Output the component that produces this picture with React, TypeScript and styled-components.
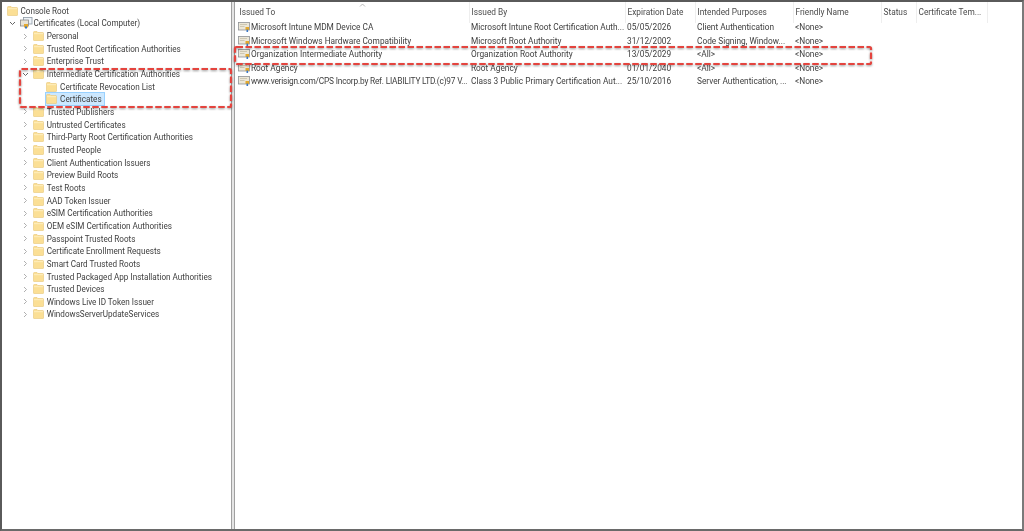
import React from 'react';
import styled, { createGlobalStyle } from 'styled-components';

const GlobalStyle = createGlobalStyle`
  html, body {
    margin: 0;
    padding: 0;
    background: #fff;
  }
`;

const Frame = styled.div`
  position: relative;
  box-sizing: border-box;
  width: 1024px;
  height: 531px;
  display: flex;
  background: #fff;
  border-top: 2px solid #5a5a5a;
  border-left: 2px solid #5a5a5a;
  border-right: 2px solid #7a7a7a;
  border-bottom: 2px solid #6a6a6a;
  font-family: Roboto, 'Open Sans', sans-serif;
  font-size: 8.3px;
  color: #404040;
`;

const TreePane = styled.div`
  box-sizing: border-box;
  width: 230px;
  flex: none;
  padding-top: 2.4px;
  border-right: 1px solid #a0a0a0;
  font-size: 8.15px;
  filter: blur(0.25px);
`;

const Divider = styled.div`
  width: 2px;
  flex: none;
  background: #e4e4e4;
`;

const ListPane = styled.div`
  flex: 1;
  border-left: 1px solid #a0a0a0;
  padding-left: 3px;
  min-width: 0;
  position: relative;
  filter: blur(0.25px);
`;

const TreeRow = styled.div<{ $depth: number }>`
  display: flex;
  align-items: center;
  height: 12.67px;
  padding-left: ${p => 4.5 + p.$depth * 13.2}px;
  white-space: nowrap;
`;

const Twisty = styled.span`
  width: 13px;
  flex: none;
  display: flex;
  align-items: center;
  padding-left: 2px;
  margin-right: -2px;
`;

const TreeItem = styled.span<{ $selected?: boolean }>`
  display: flex;
  align-items: center;
  height: 12px;
  ${p => p.$selected && `
    background: #cce8ff;
    box-shadow: 0 0 0 1px #99d1ff;
    padding-right: 1px;
  `}
`;

const TreeIcon = styled.span`
  width: 14px;
  flex: none;
  display: flex;
  align-items: center;
`;

const TreeLabel = styled.span`
  margin-left: -1px;
  padding: 0 1px;
`;

const GridRow = styled.div`
  display: grid;
  grid-template-columns: 232px 156px 70px 98px 88px 35px 71px;
  align-items: center;
  white-space: nowrap;
`;

const HeaderRow = styled(GridRow)`
  height: 18.5px;
  color: #4a4a4a;
  position: relative;
`;

const HeaderCell = styled.div`
  height: 100%;
  line-height: 21px;
  padding-left: 1.5px;
  box-sizing: border-box;
  border-right: 1px solid #eeeeee;
`;

const SortCaret = styled.svg`
  position: absolute;
  left: 121px;
  top: 1px;
`;

const DataRow = styled(GridRow)`
  height: 13.5px;
`;

const DataCell = styled.div`
  padding-left: 1px;
`;

const IssuedToCell = styled(DataCell)<{ $tight?: boolean }>`
  display: flex;
  align-items: center;
  gap: 1px;
  margin-left: -1px;
  letter-spacing: ${p => (p.$tight ? '-0.19px' : 'normal')};

  svg {
    flex: none;
  }
`;

const CalloutBox = styled.svg<{ $x: number; $y: number }>`
  position: absolute;
  left: ${p => p.$x}px;
  top: ${p => p.$y}px;
  overflow: visible;
  filter: drop-shadow(0 1px 1px rgba(0, 0, 0, 0.4));
`;

const Callout = ({ x, y, w, h }: { x: number; y: number; w: number; h: number }) => (
  <CalloutBox $x={x} $y={y} width={w} height={h} viewBox={`0 0 ${w} ${h}`}>
    <rect x="1" y="1" width={w - 2} height={h - 2} rx="1.5" fill="none" stroke="#e4443e" strokeWidth="2.2" strokeDasharray="6.5 2.5" />
  </CalloutBox>
);

const Folder = () => (
  <svg width="11" height="10" viewBox="0 0 11 10">
    <path d="M0.5 1.2 a.7 .7 0 0 1 .7-.7 H4 L5 1.5 H9.8 a.7 .7 0 0 1 .7 .7 V9 a.5 .5 0 0 1-.5 .5 H1 a.5 .5 0 0 1-.5-.5 Z" fill="#fbdf95" stroke="#e8c878" strokeWidth="0.6" />
    <path d="M1 2.7 H10" stroke="#fff1c4" strokeWidth="0.9" />
  </svg>
);

const Chevron = ({ open }: { open?: boolean }) => (
  <svg width="7" height="7" viewBox="0 0 7 7">
    <path d={open ? 'M1 2 L3.5 4.5 L6 2' : 'M2 1 L4.5 3.5 L2 6'} fill="none" stroke={open ? '#555' : '#a6a6a6'} strokeWidth="0.9" />
  </svg>
);

const StoreIcon = () => (
  <svg width="13" height="12" viewBox="0 0 13 12">
    <rect x="3.5" y="0.5" width="8.5" height="6.5" fill="#eef3f8" stroke="#8d99a6" strokeWidth="0.8" />
    <rect x="0.5" y="3" width="8" height="6" fill="#e9e4d6" stroke="#8a8a8a" strokeWidth="0.8" />
    <rect x="4" y="7" width="4" height="3.5" fill="#e3a92f" />
    <rect x="5" y="9.5" width="2" height="2" fill="#3b78c4" />
  </svg>
);

const CertIcon = () => (
  <svg width="12" height="10" viewBox="0 0 12 10">
    <rect x="0.5" y="0.5" width="11" height="7.5" fill="#ece7d8" stroke="#8f9296" strokeWidth="0.8" />
    <path d="M2 2.5 H9 M2 4.5 H6.5" stroke="#c6bfa8" strokeWidth="0.8" />
    <rect x="7.5" y="5" width="3.5" height="3" fill="#e3a92f" />
    <rect x="8.5" y="7.5" width="1.6" height="2.5" fill="#3b78c4" />
  </svg>
);

const storeNames = [
  'Trusted Publishers',
  'Untrusted Certificates',
  'Third-Party Root Certification Authorities',
  'Trusted People',
  'Client Authentication Issuers',
  'Preview Build Roots',
  'Test Roots',
  'AAD Token Issuer',
  'eSIM Certification Authorities',
  'OEM eSIM Certification Authorities',
  'Passpoint Trusted Roots',
  'Certificate Enrollment Requests',
  'Smart Card Trusted Roots',
  'Trusted Packaged App Installation Authorities',
  'Trusted Devices',
  'Windows Live ID Token Issuer',
  'WindowsServerUpdateServices',
];

const columns = ['Issued To', 'Issued By', 'Expiration Date', 'Intended Purposes', 'Friendly Name', 'Status', 'Certificate Tem...'];

const certificates = [
  ['Microsoft Intune MDM Device CA', 'Microsoft Intune Root Certification Auth...', '05/05/2026', 'Client Authentication', '<None>'],
  ['Microsoft Windows Hardware Compatibility', 'Microsoft Root Authority', '31/12/2002', 'Code Signing, Window...', '<None>'],
  ['Organization Intermediate Authority', 'Organization Root Authority', '13/05/2029', '<All>', '<None>'],
  ['Root Agency', 'Root Agency', '01/01/2040', '<All>', '<None>'],
  ['www.verisign.com/CPS Incorp.by Ref. LIABILITY LTD.(c)97 V...', 'Class 3 Public Primary Certification Aut...', '25/10/2016', 'Server Authentication, ...', '<None>'],
];

const StoreRow = ({ name }: { name: string }) => (
  <TreeRow $depth={1}>
    <Twisty><Chevron /></Twisty>
    <TreeIcon><Folder /></TreeIcon>
    <TreeLabel>{name}</TreeLabel>
  </TreeRow>
);

export default function App() {
  return (
    <>
      <GlobalStyle />
      <Frame>
        <TreePane>
          <TreeRow $depth={0}>
            <TreeIcon><Folder /></TreeIcon>
            <TreeLabel>Console Root</TreeLabel>
          </TreeRow>
          <TreeRow $depth={0}>
            <Twisty><Chevron open /></Twisty>
            <TreeIcon><StoreIcon /></TreeIcon>
            <TreeLabel>Certificates (Local Computer)</TreeLabel>
          </TreeRow>
          <StoreRow name="Personal" />
          <StoreRow name="Trusted Root Certification Authorities" />
          <StoreRow name="Enterprise Trust" />
          <TreeRow $depth={1}>
            <Twisty><Chevron open /></Twisty>
            <TreeIcon><Folder /></TreeIcon>
            <TreeLabel>Intermediate Certification Authorities</TreeLabel>
          </TreeRow>
          <TreeRow $depth={3}>
            <TreeIcon><Folder /></TreeIcon>
            <TreeLabel>Certificate Revocation List</TreeLabel>
          </TreeRow>
          <TreeRow $depth={3}>
            <TreeItem $selected>
              <TreeIcon><Folder /></TreeIcon>
              <TreeLabel>Certificates</TreeLabel>
            </TreeItem>
          </TreeRow>
          {storeNames.map(name => <StoreRow key={name} name={name} />)}
        </TreePane>
        <Divider />
        <ListPane>
          <HeaderRow>
            <SortCaret width="7" height="4" viewBox="0 0 7 4">
              <path d="M1 3.5 L3.5 1 L6 3.5" fill="none" stroke="#a8a8a8" strokeWidth="0.8" />
            </SortCaret>
            {columns.map(c => <HeaderCell key={c}>{c}</HeaderCell>)}
          </HeaderRow>
          {certificates.map(cert => (
            <DataRow key={cert[0]}>
              <IssuedToCell $tight={cert[0].length > 50}><CertIcon />{cert[0]}</IssuedToCell>
              {cert.slice(1).map((v, i) => <DataCell key={i}>{v}</DataCell>)}
            </DataRow>
          ))}
        </ListPane>
        <Callout x={17} y={66} w={213} h={40} />
        <Callout x={232} y={44} w={638} h={19} />
      </Frame>
    </>
  );
}
